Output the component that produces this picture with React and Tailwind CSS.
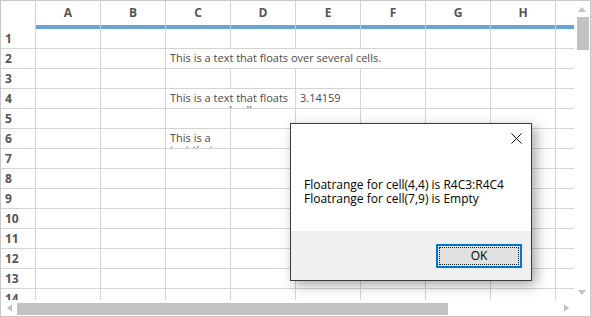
import React from "react";

const FONT = "font-['Open_Sans','Noto_Sans',sans-serif]";
const cols = ["A", "B", "C", "D", "E", "F", "G", "H"];
const line = "border-[#d4d4d4]";

function Cell({ w = "w-[65px]", children, className = "" }) {
  return (
    <div className={`${w} shrink-0 h-full border-r ${line} overflow-hidden pl-[4px] pr-[2px] pt-[3px] text-[11px] leading-[12px] text-[#4a4a4a] ${className}`}>
      {children}
    </div>
  );
}

function Row({ n, children }) {
  return (
    <div className={`flex h-[20px] shrink-0 border-b ${line}`}>
      <div className={`w-[35px] shrink-0 border-r ${line} flex items-center pl-[4px] text-[12px] font-bold text-[#555]`}>
        {n}
      </div>
      {children}
      <div className="flex-1" />
    </div>
  );
}

function Empty({ count }) {
  return Array.from({ length: count }).map((_, i) => <Cell key={i} />);
}

export default function App() {
  const rows = [];
  for (let n = 1; n <= 14; n++) {
    let content;
    if (n === 2) {
      content = (
        <>
          <Cell />
          <Cell />
          <Cell w="w-[260px]" className="whitespace-nowrap">This is a text that floats over several cells.</Cell>
          <Cell />
          <Cell />
        </>
      );
    } else if (n === 4) {
      content = (
        <>
          <Cell />
          <Cell />
          <Cell w="w-[130px]">This is a text that floats over several cells.</Cell>
          <Cell>3.14159</Cell>
          <Cell />
          <Cell />
          <Cell />
        </>
      );
    } else if (n === 6) {
      content = (
        <>
          <Cell />
          <Cell />
          <Cell>This is a text that floats over several cells.</Cell>
          <Empty count={5} />
        </>
      );
    } else {
      content = <Empty count={8} />;
    }
    rows.push(
      <Row key={n} n={n}>
        {content}
      </Row>
    );
  }

  return (
    <div className={`relative w-[591px] h-[317px] overflow-hidden bg-white border border-[#c8c8c8] ${FONT}`}>
      <div className="flex flex-col h-full">
        <div className="flex h-[299px]">
          {/* grid */}
          <div className="w-[573px] h-full overflow-hidden flex flex-col">
            <div className="flex h-[28px] shrink-0">
              <div className={`w-[35px] shrink-0 border-r ${line}`} />
              {cols.map((c) => (
                <div key={c} className="w-[65px] shrink-0 flex flex-col">
                  <div className={`flex-1 border-r ${line} flex items-center justify-center text-[12px] font-bold text-[#555]`}>
                    {c}
                  </div>
                  <div className="h-[4px] bg-[#68a5d2] border-r border-[#b3d2ea]" />
                </div>
              ))}
              <div className="flex-1 flex flex-col">
                <div className="flex-1" />
                <div className="h-[4px] bg-[#68a5d2]" />
              </div>
            </div>
            {rows}
          </div>
          {/* vertical scrollbar */}
          <div className="w-[16px] h-full flex flex-col items-center">
            <div className="h-[16px] flex items-center justify-center">
              <svg width="8" height="5" viewBox="0 0 8 5"><path d="M0 5 L4 0 L8 5 Z" fill="#c2c2c2" /></svg>
            </div>
            <div className="w-[12px] h-[33px] bg-[#c2c2c2] ml-[1px]" />
            <div className="flex-1" />
            <div className="h-[16px] flex items-center justify-center">
              <svg width="8" height="5" viewBox="0 0 8 5"><path d="M0 0 L4 5 L8 0 Z" fill="#c2c2c2" /></svg>
            </div>
          </div>
        </div>
        {/* horizontal scrollbar */}
        <div className="flex h-[16px] items-center">
          <div className="w-[573px] h-full flex items-center">
            <div className="w-[16px] flex items-center justify-center">
              <svg width="5" height="8" viewBox="0 0 5 8"><path d="M5 0 L0 4 L5 8 Z" fill="#c2c2c2" /></svg>
            </div>
            <div className="w-[431px] h-[12px] bg-[#c2c2c2] mt-[1px]" />
            <div className="flex-1" />
            <div className="w-[16px] flex items-center justify-center">
              <svg width="5" height="8" viewBox="0 0 5 8"><path d="M0 0 L5 4 L0 8 Z" fill="#c2c2c2" /></svg>
            </div>
          </div>
          <div className="flex-1" />
        </div>
      </div>

      {/* dialog */}
      <div className="absolute left-[289px] top-[122px] w-[242px] h-[158px] border border-[#3c3c3c] bg-white flex flex-col shadow-[4px_4px_12px_rgba(0,0,0,0.35)] font-['Open_Sans','Noto_Sans',sans-serif]">
        <div className="h-[107px] flex flex-col">
          <div className="h-[28px] flex justify-end items-center pr-[9px]">
            <svg width="11" height="11" viewBox="0 0 11 11">
              <path d="M0.5 0.5 L10.5 10.5 M10.5 0.5 L0.5 10.5" stroke="#111" strokeWidth="1" />
            </svg>
          </div>
          <div className="pl-[13px] pt-[26px] text-[12px] leading-[14px] text-black">
            <div>Floatrange for cell(4,4) is R4C3:R4C4</div>
            <div>Floatrange for cell(7,9) is Empty</div>
          </div>
        </div>
        <div className="flex-1 bg-[#f0f0f0] flex justify-end items-start pt-[13px] pr-[9px]">
          <div className="w-[86px] h-[24px] border-2 border-[#0078d7] bg-[#e1e1e1] p-[1px]">
            <div className="w-full h-full border border-dotted border-[#222] flex items-center justify-center text-[12px] text-black">
              OK
            </div>
          </div>
        </div>
      </div>
    </div>
  );
}
